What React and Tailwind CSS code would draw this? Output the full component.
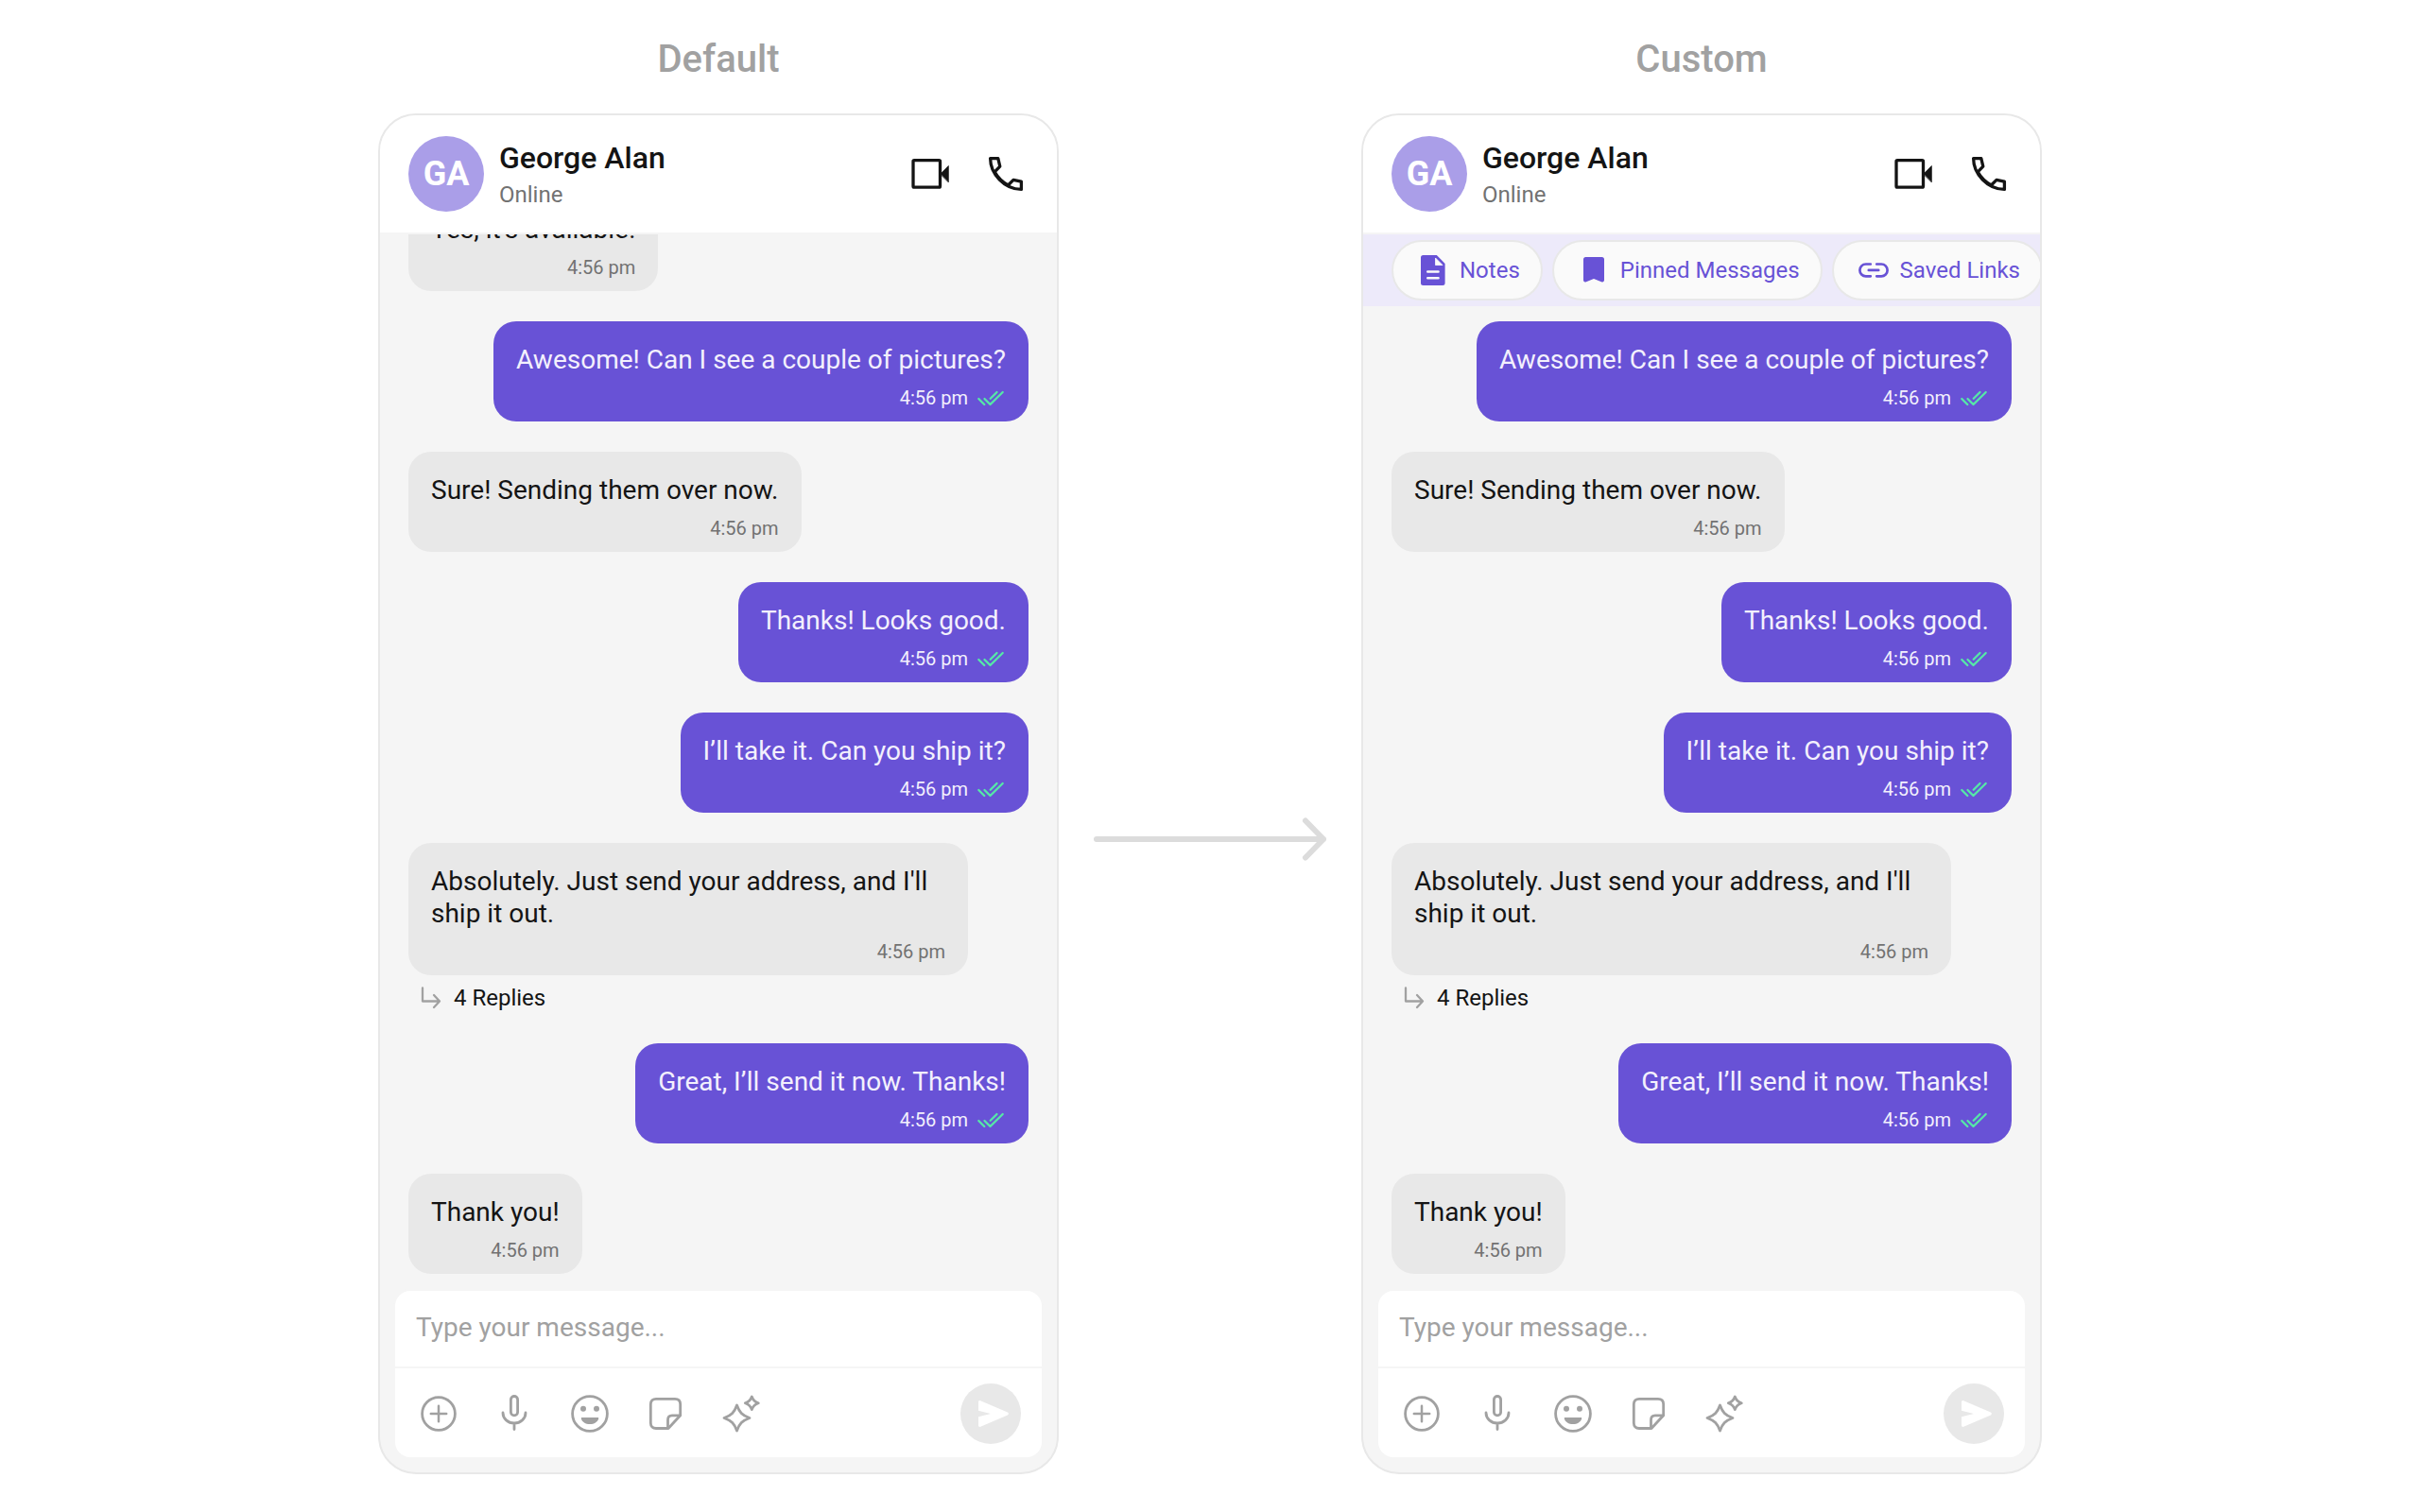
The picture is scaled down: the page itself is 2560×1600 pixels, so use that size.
import { clsx } from "clsx";

const messages = [
  { id: 1, from: "them", text: "Yes, it’s available!" },
  { id: 2, from: "me", text: "Awesome! Can I see a couple of pictures?" },
  { id: 3, from: "them", text: "Sure! Sending them over now." },
  { id: 4, from: "me", text: "Thanks! Looks good." },
  { id: 5, from: "me", text: "I’ll take it. Can you ship it?" },
  { id: 6, from: "them", text: "Absolutely. Just send your address, and I'll ship it out.", replies: 4 },
  { id: 7, from: "me", text: "Great, I’ll send it now. Thanks!" },
  { id: 8, from: "them", text: "Thank you!" },
];

const Icon = ({ children }) => (
  <svg
    viewBox="0 0 48 48"
    fill="none"
    stroke="currentColor"
    strokeWidth={2.8}
    strokeLinecap="round"
    strokeLinejoin="round"
    aria-hidden="true"
    className="size-12 shrink-0"
  >
    {children}
  </svg>
);

const VideoIcon = () => (
  <Icon>
    <rect x="6" y="9.7" width="28.5" height="28.5" rx="1.2" strokeWidth={3.3} />
    <path d="M35 24l8.3-8.5v17z" fill="currentColor" strokeWidth={0.8} />
  </Icon>
);

const PhoneIcon = () => (
  <Icon>
    <path
      d="M7.6 7.6h8.2l2 8.6-5.6 5.6c3 5.6 7.6 10.4 14.2 14.2l5.6-5.6 8.4 1.8v8.2C22.4 40.4 7.6 24 7.6 7.6z"
      strokeWidth={3.3}
    />
  </Icon>
);

const PlusIcon = () => (
  <Icon>
    <circle cx="24" cy="24" r="17.4" />
    <path d="M24 15.8v16.4M15.8 24h16.4" strokeWidth={2.5} />
  </Icon>
);

const MicIcon = () => (
  <Icon>
    <rect x="20.4" y="5.5" width="7.2" height="20.4" rx="3.6" />
    <path d="M12 23c0 6.3 5.4 11 12 11s12-4.7 12-11M24 34v6.5" />
  </Icon>
);

const SmileIcon = () => (
  <Icon>
    <circle cx="24" cy="24" r="18.4" />
    <circle cx="17" cy="18.8" r="3" fill="currentColor" stroke="none" />
    <circle cx="31" cy="18.8" r="3" fill="currentColor" stroke="none" />
    <path d="M15.8 28h16.4c.8 0 1.2.5 1 1.2-1 3.5-4.7 5.8-9.2 5.8s-8.2-2.3-9.2-5.8c-.2-.7.2-1.2 1-1.2z" fill="currentColor" stroke="none" />
  </Icon>
);

const StickerIcon = () => (
  <Icon>
    <path d="M27 39.5H14c-3.5 0-5.7-2.2-5.7-5.7V14c0-3.5 2.2-5.7 5.7-5.7h20c3.5 0 5.7 2.2 5.7 5.7v11.8z" />
    <path d="M26.5 39v-8.5c0-3 1.5-4.7 4.5-4.7h8.3" />
  </Icon>
);

const SparkleIcon = () => (
  <Icon>
    <path d="M19.500 15c2.600 7.300 5.600 10.600 13.500 13.500-7.900 2.900-10.900 6.200-13.500 13.500C16.900 34.700 13.900 31.400 6 28.500c7.900-2.900 10.900-6.200 13.500-13.500z" />
    <path d="M35.300 6c1.300 3.800 3 5.400 7 6.800-4 1.400-5.700 3-7 6.800-1.300-3.800-3-5.400-7-6.800 4-1.400 5.700-3 7-6.800z" />
  </Icon>
);

const SendIcon = () => (
  <svg viewBox="0 0 64 64" aria-hidden="true" className="size-16">
    <path d="M19 19.7c0-1.3 1.1-2 2.2-1.5l28.7 12.4c1.3.6 1.3 2.2 0 2.8l-28.7 12.4c-1.1.5-2.2-.2-2.2-1.5V35.200L32 32l-13-3.200z" fill="white" />
  </svg>
);

const TicksIcon = () => (
  <svg
    viewBox="0 0 32 24"
    fill="none"
    stroke="currentColor"
    strokeWidth={2.3}
    strokeLinecap="round"
    strokeLinejoin="round"
    aria-hidden="true"
    className="h-6 w-8 text-[#56e8a7]"
  >
    <path d="M3.3 13l6 6M9.5 13l6 6L28.7 6M22.5 6l-6.8 6.8" />
  </svg>
);

const ReplyIcon = () => (
  <svg
    viewBox="0 0 24 24"
    fill="none"
    stroke="currentColor"
    strokeWidth={2.3}
    strokeLinecap="round"
    strokeLinejoin="round"
    aria-hidden="true"
    className="size-6 text-[#a1a1a1]"
  >
    <path d="M3 1.5v14h18M15 9l6 6.5-6 6.5" />
  </svg>
);

const NotesIcon = () => (
  <svg viewBox="0 0 40 40" aria-hidden="true" className="size-10">
    <path d="M9.5 4h14.3L32.6 13v20.5a2.5 2.5 0 0 1-2.5 2.5H9.5A2.5 2.5 0 0 1 7 33.5v-27A2.5 2.5 0 0 1 9.5 4z" fill="currentColor" />
    <path d="M22.5 7v7.5H30z" fill="#fafafa" stroke="#fafafa" strokeWidth={0.8} strokeLinejoin="round" />
    <path d="M14.3 21.5h11.2M14.3 28.3h11.2" stroke="#fafafa" strokeWidth={2.6} strokeLinecap="round" />
  </svg>
);

const BookmarkIcon = () => (
  <svg viewBox="0 0 40 40" aria-hidden="true" className="size-10">
    <path d="M11.5 6h17A2.5 2.5 0 0 1 31 8.5v21.8c0 1.700-1.400 2.600-2.900 1.900L20 29l-8.100 3.200C10.400 32.900 9 32 9 30.300V8.500A2.500 2.500 0 0 1 11.500 6z" fill="currentColor" />
  </svg>
);

const LinkIcon = () => (
  <svg
    viewBox="0 0 40 40"
    fill="none"
    stroke="currentColor"
    strokeWidth={2.7}
    strokeLinecap="round"
    aria-hidden="true"
    className="size-10"
  >
    <path d="M16.8 13.5h-5a6.4 6.4 0 0 0 0 12.8h5M23.2 13.5h5a6.4 6.4 0 0 1 0 12.8h-5M14.8 19.9h10.4" />
  </svg>
);

const shortcuts = [
  { label: "Notes", icon: NotesIcon },
  { label: "Pinned Messages", icon: BookmarkIcon },
  { label: "Saved Links", icon: LinkIcon },
];

const tools = [
  { label: "Attach", icon: PlusIcon },
  { label: "Record voice", icon: MicIcon },
  { label: "Emoji", icon: SmileIcon },
  { label: "Stickers", icon: StickerIcon },
  { label: "Smart replies", icon: SparkleIcon },
];

function Header() {
  return (
    <header className="flex shrink-0 items-center gap-4 border-b-2 border-[#f5f5f5] bg-white px-[30px] py-[22px]">
      <div className="flex size-20 shrink-0 items-center justify-center rounded-full bg-[#aa9ee8] text-4xl font-bold text-white">
        GA
      </div>
      <div className="min-w-0 flex-1">
        <h2 className="text-[32px] leading-[38px] font-medium">George Alan</h2>
        <p className="mt-[6px] text-2xl leading-7 text-[#727272]">Online</p>
      </div>
      <div className="flex gap-8">
        <button type="button" aria-label="Video call">
          <VideoIcon />
        </button>
        <button type="button" aria-label="Voice call">
          <PhoneIcon />
        </button>
      </div>
    </header>
  );
}

function Shortcuts() {
  return (
    <nav className="flex shrink-0 gap-[10px] overflow-hidden bg-[#edeafa] py-[6px] pl-[30px]">
      {shortcuts.map(({ label, icon: ShortcutIcon }) => (
        <button
          key={label}
          type="button"
          className="flex h-16 shrink-0 items-center gap-2 rounded-full border-2 border-[#e8e8e8] bg-[#fafafa] px-[22px] text-2xl text-[#6852d6]"
        >
          <ShortcutIcon />
          {label}
        </button>
      ))}
    </nav>
  );
}

function Message({ from, text, replies }) {
  const mine = from === "me";
  return (
    <li className={clsx("flex shrink-0 flex-col", mine ? "items-end" : "items-start")}>
      <div
        className={clsx(
          "flex max-w-[592px] flex-col gap-[11px] rounded-3xl px-6 pt-6 pb-[13px]",
          mine ? "bg-[#6852d6] text-[#f3f0fd]" : "bg-[#e8e8e8]"
        )}
      >
        <p className="text-[28px] leading-[34px]">{text}</p>
        <div className={clsx("flex items-center justify-end gap-2 text-xl leading-6", !mine && "text-[#727272]")}>
          <time>4:56 pm</time>
          {mine && <TicksIcon />}
        </div>
      </div>
      {replies && (
        <button type="button" className="flex h-10 items-center gap-3 pt-2 pl-3 text-2xl">
          <ReplyIcon />
          {replies} Replies
        </button>
      )}
    </li>
  );
}

function Composer() {
  return (
    <form
      onSubmit={(e) => e.preventDefault()}
      className="mx-[14px] mb-[14px] shrink-0 rounded-[18px] border-2 border-[#f5f5f5] bg-white"
    >
      <input
        type="text"
        aria-label="Message"
        placeholder="Type your message..."
        className="block h-20 w-full px-[22px] pb-1 text-[28px] outline-none placeholder:text-[#a1a1a1]"
      />
      <div className="flex items-center gap-8 border-t-2 border-[#f5f5f5] px-[22px] pt-4 pb-[14px] text-[#a1a1a1]">
        {tools.map(({ label, icon: ToolIcon }) => (
          <button key={label} type="button" aria-label={label}>
            <ToolIcon />
          </button>
        ))}
        <button type="submit" aria-label="Send" className="ml-auto rounded-full bg-[#e8e8e8]">
          <SendIcon />
        </button>
      </div>
    </form>
  );
}

function Phone({ title, withShortcuts }) {
  return (
    <section className="flex w-full max-w-[720px] flex-col">
      <h1 className="text-center text-[40px] leading-[46px] font-medium text-[#a1a1a1]">{title}</h1>
      <div className="mt-[34px] flex h-[1440px] flex-col overflow-hidden rounded-[40px] border-2 border-[#e8e8e8] bg-[#f5f5f5]">
        <Header />
        {withShortcuts && <Shortcuts />}
        {/* newest message stays at the bottom, older ones are cut off at the top */}
        <ul className="flex min-h-0 flex-1 flex-col justify-end gap-8 overflow-hidden px-[30px] pb-4">
          {messages.map((m) => (
            <Message key={m.id} {...m} />
          ))}
        </ul>
        <Composer />
      </div>
    </section>
  );
}

export default function App() {
  return (
    <main className="flex min-h-screen justify-center gap-9 bg-white px-8 py-10 font-[Roboto,sans-serif] text-[#141414]">
      <Phone title="Default" />
      <svg
        viewBox="0 0 248 48"
        fill="none"
        stroke="#dcdcdc"
        strokeWidth={6}
        strokeLinecap="round"
        strokeLinejoin="round"
        aria-hidden="true"
        className="mt-44 w-[248px] shrink-0 self-center"
      >
        <path d="M4 24h240M225 4.5l19 19.5-19 19.5" />
      </svg>
      <Phone title="Custom" withShortcuts />
    </main>
  );
}
